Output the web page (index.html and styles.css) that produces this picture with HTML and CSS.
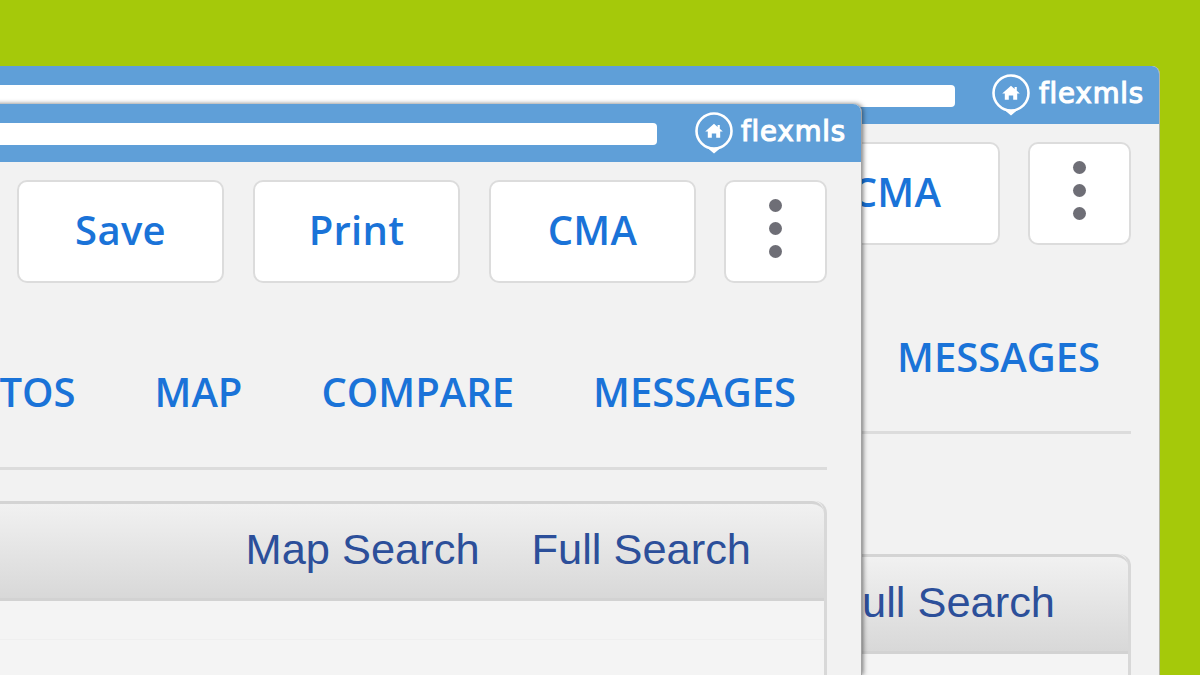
FILE: index.html
```html
<!DOCTYPE html>
<html lang="en">
<head>
<meta charset="utf-8">
<title>flexmls</title>
<link rel="stylesheet" href="styles.css">
</head>
<body>
<svg class="defs" width="0" height="0" aria-hidden="true">
  <symbol id="pin" viewBox="0 0 38 42">
    <circle cx="19" cy="19" r="17.5" fill="none" stroke="#fff" stroke-width="2.6"/>
    <path d="M9.5 33.5q9.5 5 19 0L19 41.5z" fill="#fff"/>
    <path d="M19 11.8l3.6 3.1v-2h2.2v3.9l3 2.6h-2.6v6.4h-4v-4.4h-4.4v4.4h-4v-6.4h-2.6z" fill="#fff"/>
  </symbol>
</svg>

<section class="window window-back">
  <header class="titlebar">
    <div class="searchbar"></div>
    <div class="logo"><svg class="pin"><use href="#pin"/></svg><span class="logo-text">flexmls</span></div>
  </header>
  <div class="content">
    <div class="toolbar">
      <a class="btn">CMA</a>
      <a class="btn btn-more"><i></i><i></i><i></i></a>
    </div>
    <nav class="tabs"><a>MESSAGES</a></nav>
    <div class="panel">
      <div class="panel-head"><a>Full Search</a></div>
      <div class="panel-body"><div class="panel-row"></div></div>
    </div>
  </div>
</section>

<section class="window window-front">
  <header class="titlebar">
    <div class="searchbar"></div>
    <div class="logo"><svg class="pin"><use href="#pin"/></svg><span class="logo-text">flexmls</span></div>
  </header>
  <div class="content">
    <div class="toolbar">
      <a class="btn">Save</a><a class="btn">Print</a><a class="btn">CMA</a>
      <a class="btn btn-more"><i></i><i></i><i></i></a>
    </div>
    <nav class="tabs"><a>PHOTOS</a><a>MAP</a><a>COMPARE</a><a>MESSAGES</a></nav>
    <div class="panel">
      <div class="panel-head"><a>Map Search</a><a>Full Search</a></div>
      <div class="panel-body"><div class="panel-row"></div></div>
    </div>
  </div>
</section>
</body>
</html>
```

FILE: styles.css
```css
* { box-sizing: border-box; }
html, body { margin: 0; height: 100%; }
body {
  position: relative;
  width: 1200px;
  height: 675px;
  overflow: hidden;
  background: #a5c90a;
  font-family: "Open Sans", "Liberation Sans", sans-serif;
}
.defs { position: absolute; }

.window {
  position: absolute;
  width: 1200px;
  height: 609px;
  overflow: hidden;
  background: #f2f2f2;
  border-radius: 0 8px 0 0;
  display: flex;
  flex-direction: column;
}
.window-back {
  left: -40px;
  top: 66px;
  border-right: 1px solid #b5b5a5;
}
.window-front {
  left: -338px;
  top: 104px;
  height: 571px;
  overflow: visible;
  border-right: 1px solid #a2a2a2;
  box-shadow: 1px 0 5px rgba(0, 0, 0, .55);
}

.titlebar {
  height: 58px;
  flex: none;
  background: #5f9fd8;
  border-radius: 0 8px 0 0;
  display: flex;
  align-items: center;
  justify-content: flex-end;
  padding-right: 17px;
}
.window-back .titlebar { margin-right: -1px; }
.window-front .titlebar { padding-right: 16px; }
.searchbar {
  flex: 1;
  height: 22px;
  margin: 2px 38px 0 0;
  background: #fff;
  border-radius: 0 4px 4px 0;
}
.window-back .searchbar { margin-right: 37px; }
.logo { display: flex; align-items: center; gap: 9px; }
.window-front .logo { gap: 8px; }
.pin { width: 38px; height: 42px; flex: none; }
.logo-text {
  color: #fff;
  font: 400 27.5px/1 "DejaVu Sans", sans-serif;
  -webkit-text-stroke: 1.2px #fff;
  letter-spacing: .9px;
  margin-top: -2px;
  width: 104px;
  white-space: nowrap;
}

.content {
  flex: 1;
  min-height: 0;
  display: flex;
  flex-direction: column;
  padding: 18px 34px 0 0;
}
.window-back .content { padding-right: 28px; }

.toolbar { display: flex; flex: none; justify-content: flex-end; gap: 29px; }
.btn {
  width: 207px;
  height: 103px;
  background: #fff;
  border: 2px solid #dcdcdc;
  border-radius: 10px;
  display: flex;
  align-items: center;
  justify-content: center;
  padding-bottom: 5px;
  color: #1a73d8;
  font-size: 40px;
  font-weight: 600;
  letter-spacing: .3px;
}
.btn-more {
  width: 103px;
  margin-left: -1px;
  flex-direction: column;
  gap: 10px;
  padding-bottom: 7px;
}
.btn-more i {
  width: 13px;
  height: 13px;
  border-radius: 50%;
  background: #6e6e76;
}

.tabs {
  display: flex;
  flex: none;
  justify-content: flex-end;
  gap: 79px;
  padding: 0 31px 0 0;
  margin-top: 84px;
  height: 103px;
  border-bottom: 3px solid #dcdcdc;
  color: #1a73d8;
  font-size: 40px;
  font-weight: 600;
  line-height: 50px;
  white-space: nowrap;
}
.window-back .tabs { height: 105px; line-height: 55px; }

.panel {
  margin-top: 31px;
  display: flex;
  flex-direction: column;
  flex: 1;
  min-height: 0;
  border-right: 3px solid #d8d8d8;
  border-radius: 0 12px 0 0;
}
.window-back .panel { margin-top: 120px; }
.panel-head {
  height: 100px;
  flex: none;
  display: flex;
  justify-content: flex-end;
  align-items: center;
  gap: 52px;
  padding: 0 73px 2px 0;
  background: linear-gradient(#f1f1f1, #d8d8d8);
  border-top: 3px solid #d4d4d4;
  border-bottom: 3px solid #d2d2d2;
  border-radius: 0 12px 0 0;
  color: #2c4f9a;
  font: 43.4px/1 "Liberation Sans", Arial, sans-serif;
  white-space: nowrap;
}
.panel-body { flex: 1; background: #f4f4f4; }
.panel-row { height: 39px; border-bottom: 1px solid #efefef; }
```
